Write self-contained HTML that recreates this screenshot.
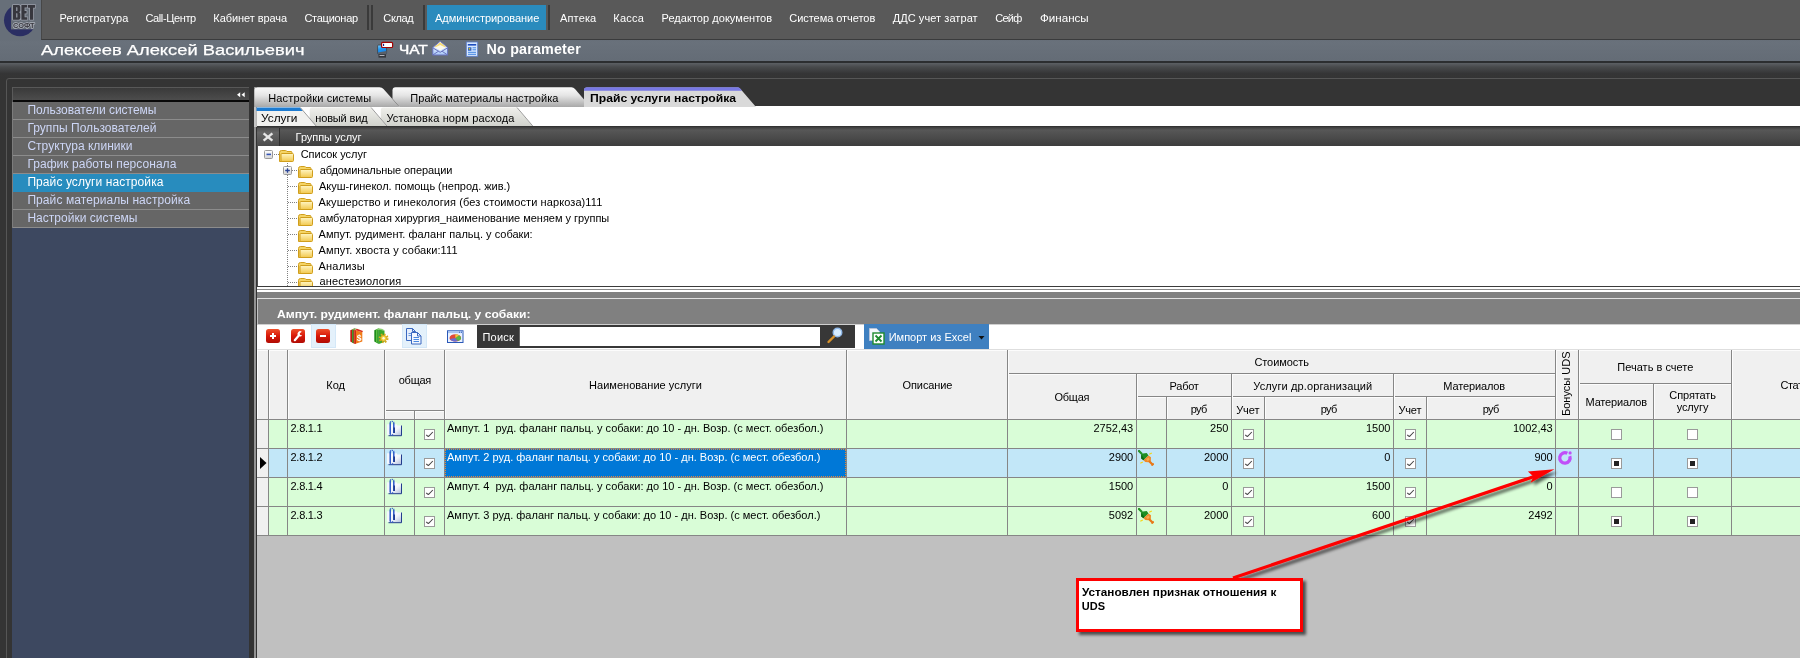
<!DOCTYPE html>
<html><head><meta charset="utf-8"><style>
*{box-sizing:border-box;margin:0;padding:0}
html,body{width:1800px;height:658px;overflow:hidden;background:#343434}
body{position:relative;font-family:"Liberation Sans",sans-serif;font-size:11px;color:#000}
#root{position:absolute;left:0;top:0;width:1800px;height:658px;will-change:transform;overflow:hidden}
.a{position:absolute}
.t{position:absolute;white-space:pre;line-height:normal}
svg{position:absolute;left:0;top:0;overflow:visible}
</style></head><body>
<div id="root">
<div class="a" style="left:0px;top:0px;width:1800px;height:61px;background:linear-gradient(#676f79 40px,#69717b 42px,#646c76 61px)"></div>
<div class="a" style="left:41px;top:0px;width:1759px;height:40px;background:#595959;border-left:1px solid #474747;border-bottom:1px solid #3a3b3c"></div>
<div class="a" style="left:0px;top:61px;width:1800px;height:18px;background:linear-gradient(#2c2e30 0,#2c2e30 1.5px,#5c6064 2px,#484a4c 6px,#353536 12.5px,#343434 18px)"></div>
<svg width="45" height="42"><circle cx="20" cy="20.200" r="16" fill="#2a2e63"/>
<rect x="11" y="0" width="29.500" height="29.400" fill="#666e78"/>
<path d="M13 5 H18.600 Q20.300 5 20.300 6.800 V10.600 Q20.300 12 19 12.200 Q20.300 12.500 20.300 14 V17.900 Q20.300 19.700 18.600 19.700 H13Z M16.200 7.300 V11 H17 Q17.400 11 17.400 10.500 V7.800 Q17.400 7.300 17 7.300Z M16.200 13.300 V17.400 H17 Q17.400 17.400 17.400 16.900 V13.800 Q17.400 13.300 17 13.300Z M21.400 5 H27.200 V7.500 H24.600 V11 H26.600 V13.400 H24.600 V17.200 H27.300 V19.700 H21.400Z M28 5 H35.200 V7.700 H33.200 V19.700 H30 V7.700 H28Z" fill="#b8bcc8" stroke="#b0b4c0" stroke-width="1.600" stroke-linejoin="round" opacity=".7" fill-rule="evenodd"/>
<path d="M13 5 H18.600 Q20.300 5 20.300 6.800 V10.600 Q20.300 12 19 12.200 Q20.300 12.500 20.300 14 V17.900 Q20.300 19.700 18.600 19.700 H13Z M16.200 7.300 V11 H17 Q17.400 11 17.400 10.500 V7.800 Q17.400 7.300 17 7.300Z M16.200 13.300 V17.400 H17 Q17.400 17.400 17.400 16.900 V13.800 Q17.400 13.300 17 13.300Z M21.400 5 H27.200 V7.500 H24.600 V11 H26.600 V13.400 H24.600 V17.200 H27.300 V19.700 H21.400Z M28 5 H35.200 V7.700 H33.200 V19.700 H30 V7.700 H28Z" fill="#37373e" fill-rule="evenodd"/>
<g font-family="Liberation Sans" font-weight="bold" stroke-linejoin="round">
<text x="13" y="27.700" font-size="7.400" fill="#c4c8d2" stroke="#c0c4ce" stroke-width="1.500" opacity=".8" textLength="21.500" lengthAdjust="spacingAndGlyphs">СОФТ</text>
<text x="13" y="27.700" font-size="7.400" fill="#38383f" textLength="21.500" lengthAdjust="spacingAndGlyphs">СОФТ</text></g></svg>
<span class="t" style="left:59.5px;top:11.8px;font-size:11px;color:#fff;letter-spacing:0.04px;">Регистратура</span>
<span class="t" style="left:145.5px;top:11.8px;font-size:11px;color:#fff;letter-spacing:-0.38px;">Call-Центр</span>
<span class="t" style="left:213.3px;top:11.8px;font-size:11px;color:#fff;letter-spacing:-0.07px;">Кабинет врача</span>
<span class="t" style="left:304.4px;top:11.8px;font-size:11px;color:#fff;letter-spacing:-0.26px;">Стационар</span>
<span class="t" style="left:383.3px;top:11.8px;font-size:11px;color:#fff;letter-spacing:-0.34px;">Склад</span>
<div class="a" style="left:367px;top:5px;width:2px;height:25px;background:#3a3a3a"></div>
<div class="a" style="left:371px;top:5px;width:2px;height:25px;background:#3a3a3a"></div>
<div class="a" style="left:423px;top:5px;width:2px;height:25px;background:#3a3a3a"></div>
<div class="a" style="left:548px;top:5px;width:2px;height:25px;background:#3a3a3a"></div>
<div class="a" style="left:427px;top:5px;width:119px;height:25px;background:#2a8bbd"></div>
<span class="t" style="left:435.0px;top:11.8px;font-size:11px;color:#fff;letter-spacing:-0.04px;">Администрирование</span>
<span class="t" style="left:560.0px;top:11.8px;font-size:11px;color:#fff;letter-spacing:0.14px;">Аптека</span>
<span class="t" style="left:613.3px;top:11.8px;font-size:11px;color:#fff;letter-spacing:0.26px;">Касса</span>
<span class="t" style="left:661.5px;top:11.8px;font-size:11px;color:#fff;letter-spacing:0.04px;">Редактор документов</span>
<span class="t" style="left:789.3px;top:11.8px;font-size:11px;color:#fff;letter-spacing:-0.05px;">Система отчетов</span>
<span class="t" style="left:892.7px;top:11.8px;font-size:11px;color:#fff;letter-spacing:0.07px;">ДДС учет затрат</span>
<span class="t" style="left:995.3px;top:11.8px;font-size:11px;color:#fff;letter-spacing:-0.76px;">Сейф</span>
<span class="t" style="left:1040.0px;top:11.8px;font-size:11px;color:#fff;transform-origin:0 0;transform:scaleX(1.0544);">Финансы</span>
<span class="t" style="left:41.0px;top:41.2px;font-size:15.5px;color:#fff;transform-origin:0 0;transform:scaleX(1.1824);-webkit-text-stroke:.25px #fff;">Алексеев Алексей Васильевич</span>
<span class="t" style="left:398.7px;top:42.0px;font-size:13.5px;color:#fff;transform-origin:0 0;transform:scaleX(1.1427);-webkit-text-stroke:.5px #fff;">ЧАТ</span>
<span class="t" style="left:486.6px;top:41.4px;font-size:14.3px;color:#fff;font-weight:bold;letter-spacing:0.18px;">No parameter</span>
<svg width="600" height="62">
<defs><linearGradient id="mon" x1="0" y1="0" x2=".3" y2="1"><stop offset="0" stop-color="#7fd0ff"/><stop offset=".5" stop-color="#1e96f2"/><stop offset="1" stop-color="#1a80e0"/></linearGradient><linearGradient id="env" x1="0" y1="0" x2="0" y2="1"><stop offset="0" stop-color="#fff"/><stop offset="1" stop-color="#a8c8f8"/></linearGradient></defs>
<g><rect x="377.600" y="45" width="9" height="9.200" rx="1" fill="url(#mon)" stroke="#3c4046" stroke-width=".8"/><path d="M378 52.500 L386.500 51 L386.500 54 L378 54Z" fill="#5a6068"/><path d="M378.500 54.300 h7.500 v3.300 h-7.500Z" fill="#34363a"/><path d="M379.500 55.500 h5" stroke="#b0b4bc" stroke-width="1"/><rect x="381.600" y="42.400" width="11" height="5.100" rx="1" fill="#fff" stroke="#a00404" stroke-width="1.200"/><rect x="383" y="43.800" width="1.100" height="2.200" fill="#102090"/></g>
<g><path d="M432.800 47.500 L440.200 41.300 L447.600 47.500 L447.600 55 L432.800 55Z" fill="url(#env)" stroke="#6a74c0" stroke-width="1"/><path d="M434.500 46.800 L440.200 42.300 L446 46.800 L440.200 49.500Z" fill="#f6dc7a"/><path d="M435 47.500 L440.200 45 L445.500 47.500 L440.200 50.500Z" fill="#fff" opacity=".85"/><path d="M432.800 47.800 L440.200 52.300 L447.600 47.800 M432.800 55 L438.500 51.200 M447.600 55 L442 51.200" fill="none" stroke="#6a74c0" stroke-width="1"/></g>
<g><rect x="466.300" y="42" width="11.400" height="14.300" fill="#d8e8ff" stroke="#5a7cc8" stroke-width=".8"/><rect x="467.800" y="44" width="8.400" height="1.600" fill="#1c4cc0"/><rect x="468" y="47.300" width="3.400" height="3.400" fill="#1e56c8"/><rect x="468.700" y="48" width="1.600" height="1.600" fill="#d8c020"/><path d="M472.500 47.800 h3.500 M472.500 49.800 h3.500 M468 52.300 h8 M468 54.300 h8" stroke="#2c78e0" stroke-width=".9"/></g>
</svg>
<div class="a" style="left:6px;top:78px;width:1810px;height:600px;border:1px solid #565656;border-radius:3px 0 0 0"></div>
<div class="a" style="left:12px;top:87px;width:237px;height:571px;background:#3d4860"></div>
<div class="a" style="left:12px;top:87px;width:237px;height:15px;background:linear-gradient(#585858 0,#585858 1px,#3a3a3a 1px,#4d4d4d 13.5px,#080808 13.500px,#080808 15px);border-left:1px solid #5a5a5a"></div>
<div class="a" style="left:12px;top:102px;width:1px;height:126px;background:#7c7c7c;z-index:2"></div>
<svg width="260" height="110"><path d="M240.200 92.300 L240.200 97.300 L237 94.800Z M244.700 92.300 L244.700 97.300 L241.500 94.800Z" fill="#fff"/></svg>
<div class="a" style="left:12px;top:102px;width:237px;height:18px;background:#666;border-bottom:1px solid #8c8c8c"></div>
<span class="t" style="left:27.4px;top:103.1px;font-size:12px;color:#cdd6f6;letter-spacing:-0.01px;">Пользователи системы</span>
<div class="a" style="left:12px;top:120px;width:237px;height:18px;background:#666;border-bottom:1px solid #8c8c8c"></div>
<span class="t" style="left:27.4px;top:121.1px;font-size:12px;color:#cdd6f6;letter-spacing:0.04px;">Группы Пользователей</span>
<div class="a" style="left:12px;top:138px;width:237px;height:18px;background:#666;border-bottom:1px solid #8c8c8c"></div>
<span class="t" style="left:27.4px;top:139.1px;font-size:12px;color:#cdd6f6;letter-spacing:0.03px;">Структура клиники</span>
<div class="a" style="left:12px;top:156px;width:237px;height:18px;background:#666;border-bottom:1px solid #8c8c8c"></div>
<span class="t" style="left:27.4px;top:157.1px;font-size:12px;color:#cdd6f6;letter-spacing:0.04px;">График работы персонала</span>
<div class="a" style="left:12px;top:174px;width:237px;height:18px;background:#288cbe"></div>
<span class="t" style="left:27.4px;top:175.1px;font-size:12px;color:#fff;letter-spacing:0.08px;">Прайс услуги настройка</span>
<div class="a" style="left:12px;top:192px;width:237px;height:18px;background:#666;border-bottom:1px solid #8c8c8c"></div>
<span class="t" style="left:27.4px;top:193.1px;font-size:12px;color:#cdd6f6;letter-spacing:0.08px;">Прайс материалы настройка</span>
<div class="a" style="left:12px;top:210px;width:237px;height:18px;background:#666;border-bottom:1px solid #8c8c8c"></div>
<span class="t" style="left:27.4px;top:211.1px;font-size:12px;color:#cdd6f6;letter-spacing:0.02px;">Настройки системы</span>
<div class="a" style="left:12px;top:227px;width:237px;height:1px;background:#8c8c8c"></div>
<div class="a" style="left:249px;top:87px;width:5px;height:571px;background:#333"></div>
<div class="a" style="left:253.7px;top:87px;width:2.8px;height:571px;background:#929292"></div>
<div class="a" style="left:257px;top:106px;width:1543px;height:21px;background:#fff"></div>
<svg width="1800" height="130">
<defs><linearGradient id="tg" x1="0" y1="0" x2="0" y2="1"><stop offset="0" stop-color="#fafafa"/><stop offset=".4" stop-color="#e6e6e6"/><stop offset="1" stop-color="#a8a8a8"/></linearGradient>
<linearGradient id="tg2" x1="0" y1="0" x2="0" y2="1"><stop offset="0" stop-color="#efefeb"/><stop offset="1" stop-color="#cfd1cb"/></linearGradient>
<linearGradient id="ta" x1="0" y1="0" x2="0" y2="1"><stop offset="0" stop-color="#fff"/><stop offset="1" stop-color="#d8d8d8"/></linearGradient></defs>
<path d="M254.500 107 L254.500 90.300 Q254.500 87.300 257.500 87.300 L379.500 87.300 Q382 87.300 383.500 89 L399.500 107Z" fill="url(#tg)"/>
<path d="M399.500 107 L392.500 98.800 L392.500 90.300 Q392.500 87.300 395.500 87.300 L571.500 87.300 Q573.500 87.300 575 89 L590.500 107Z" fill="url(#tg)"/>
<path d="M584 107 L584 90 Q584 87.500 587 87.500 L738 87.500 Q739.500 87.500 740.500 89 L756 107Z" fill="#d9d9d9"/>
<path d="M584 90.800 L584 90 Q584 87.300 587 87.300 L738 87.300 Q739.500 87.300 740.500 89 L742 90.800Z" fill="#7878e4"/>
<!-- row2 -->
<rect x="254" y="107" width="2.500" height="20" fill="#c4c4c4"/>
<path d="M256.500 127 L256.500 107.500 L300 107.500 L316.700 127Z" fill="#f1f1ef"/>
<path d="M256.500 107.500 L300 107.500 L303 111 L256.500 111Z" fill="#1d7bd0"/>
<path d="M316.700 127 L309.700 119 L309.700 110 Q309.700 107.500 312.200 107.500 L370.800 107.500 L387.500 127Z" fill="url(#tg2)"/>
<path d="M387.500 127 L380.800 119.500 L380.800 110 Q380.800 107.500 383.300 107.500 L516.700 107.500 L533.300 127Z" fill="url(#tg2)"/>
<path d="M300.300 107.500 L317 127 M371.100 107.500 L387.800 127 M517 107.500 L533.600 127" stroke="#9c9c9c" stroke-width="1" fill="none"/>
</svg>
<span class="t" style="left:268.2px;top:92.3px;font-size:11px;color:#000;letter-spacing:0.15px;">Настройки системы</span>
<span class="t" style="left:410.3px;top:92.3px;font-size:11px;color:#000;letter-spacing:0.03px;">Прайс материалы настройка</span>
<span class="t" style="left:589.5px;top:92.3px;font-size:11px;color:#000;font-weight:bold;transform-origin:0 0;transform:scaleX(1.1060);">Прайс услуги настройка</span>
<span class="t" style="left:261.3px;top:112.3px;font-size:11px;color:#000;transform-origin:0 0;transform:scaleX(1.0790);">Услуги</span>
<span class="t" style="left:315.3px;top:112.3px;font-size:11px;color:#000;letter-spacing:-0.16px;">новый вид</span>
<span class="t" style="left:386.4px;top:112.3px;font-size:11px;color:#000;letter-spacing:0.12px;">Установка норм расхода</span>
<div class="a" style="left:257px;top:126px;width:1543px;height:20px;background:linear-gradient(#2c2c2c 0,#404040 1.5px,#575757 4px,#3d3d3d 100%)"></div>
<div class="a" style="left:256.5px;top:127.5px;width:23px;height:18.5px;background:linear-gradient(#525252,#666 25%,#4c4c4c);border-right:1px solid #2e2e2e"></div>
<svg width="300" height="150"><path d="M263.600 133.300 L272.400 140.600 M272.400 133.300 L263.600 140.600" stroke="#e6e6e6" stroke-width="2.400" fill="none"/></svg>
<span class="t" style="left:295.6px;top:131.1px;font-size:11px;color:#fff;letter-spacing:-0.05px;">Группы услуг</span>
<div class="a" style="left:256.5px;top:146px;width:1543.5px;height:140px;background:#fff;border-left:1px solid #505050"></div>
<svg width="700" height="286" style="clip-path:inset(0 0 0 0)"><defs><linearGradient id="fg" x1="0" y1="0" x2="0" y2="1"><stop offset="0" stop-color="#fff6c4"/><stop offset="1" stop-color="#f2c84e"/></linearGradient><linearGradient id="bx" x1="0" y1="0" x2="0" y2="1"><stop offset="0" stop-color="#fff"/><stop offset="1" stop-color="#d4d4d4"/></linearGradient><g id="fold"><path d="M0.500 2.500 Q0.500 0.500 2.500 0.500 L6.500 0.500 Q7.500 0.500 8 1.500 L12 1.500 Q13 1.500 13 2.500 L13 11.500 L0.500 11.500Z" fill="#f4d466" stroke="#d09e1c" stroke-width="1"/><rect x="2" y="3.500" width="12.500" height="8" rx="1" fill="url(#fg)" stroke="#d09e1c" stroke-width="1"/></g></defs><path d="M274 154.500 L279 154.500 M287.500 163 L287.500 286" stroke="#808080" stroke-width="1" stroke-dasharray="1 1" fill="none"/><use href="#fold" x="279" y="150"/><rect x="264.500" y="150.5" width="8" height="8" rx="1" fill="url(#bx)" stroke="#9a9a9a"/><path d="M266.500 154.4 h4.500" stroke="#3555b5" stroke-width="1.600"/><path d="M292 170.5 L298 170.5" stroke="#808080" stroke-width="1" stroke-dasharray="1 1"/><use href="#fold" x="298" y="166"/><rect x="283.500" y="166.5" width="8" height="8" rx="1" fill="url(#bx)" stroke="#9a9a9a"/><path d="M285.200 170.5 h4.600 M287.500 168.2 v4.600" stroke="#2a4496" stroke-width="1.300"/><path d="M288 186.5 L298 186.5" stroke="#808080" stroke-width="1" stroke-dasharray="1 1"/><use href="#fold" x="298" y="182"/><path d="M288 202.5 L298 202.5" stroke="#808080" stroke-width="1" stroke-dasharray="1 1"/><use href="#fold" x="298" y="198"/><path d="M288 218.5 L298 218.5" stroke="#808080" stroke-width="1" stroke-dasharray="1 1"/><use href="#fold" x="298" y="214"/><path d="M288 234.5 L298 234.5" stroke="#808080" stroke-width="1" stroke-dasharray="1 1"/><use href="#fold" x="298" y="230"/><path d="M288 250.5 L298 250.5" stroke="#808080" stroke-width="1" stroke-dasharray="1 1"/><use href="#fold" x="298" y="246"/><path d="M288 266.5 L298 266.5" stroke="#808080" stroke-width="1" stroke-dasharray="1 1"/><use href="#fold" x="298" y="262"/><path d="M288 282.5 L298 282.5" stroke="#808080" stroke-width="1" stroke-dasharray="1 1"/><use href="#fold" x="298" y="278"/></svg>
<span class="t" style="left:300.7px;top:147.5px;font-size:11px;color:#000;letter-spacing:-0.02px;">Список услуг</span>
<span class="t" style="left:319.7px;top:163.8px;font-size:11px;color:#000;letter-spacing:-0.09px;">абдоминальные операции</span>
<span class="t" style="left:319.0px;top:179.8px;font-size:11px;color:#000;letter-spacing:-0.02px;">Акуш-гинекол. помощь (непрод. жив.)</span>
<span class="t" style="left:318.6px;top:195.8px;font-size:11px;color:#000;letter-spacing:0.09px;">Акушерство и гинекология (без стоимости наркоза)111</span>
<span class="t" style="left:319.6px;top:211.8px;font-size:11px;color:#000;letter-spacing:-0.02px;">амбулаторная хирургия_наименование меняем у группы</span>
<span class="t" style="left:318.6px;top:227.8px;font-size:11px;color:#000;letter-spacing:0.01px;">Ампут. рудимент. фаланг пальц. у собаки:</span>
<span class="t" style="left:318.6px;top:243.8px;font-size:11px;color:#000;letter-spacing:0.10px;">Ампут. хвоста у собаки:111</span>
<span class="t" style="left:318.6px;top:259.8px;font-size:11px;color:#000;letter-spacing:0.18px;">Анализы</span>
<span class="t" style="left:319.6px;top:275.4px;font-size:11px;color:#000;letter-spacing:0.09px;">анестезиология</span>
<div class="a" style="left:256.5px;top:285.8px;width:1543.5px;height:13.4px;background:linear-gradient(#3c3c3c 0,#3c3c3c .9px,#fff 1.2px,#fff 3px,#8a8a8a 3px,#8a8a8a 4.4px,#fff 4.4px,#fff 6.2px,#808080 6.2px,#808080 12.1px,#e0e0e0 12.1px,#e0e0e0 13.400px)"></div>
<div class="a" style="left:256.5px;top:299.2px;width:1543.5px;height:24.8px;background:#808080;border-left:1px solid #c4c4c4"></div>
<span class="t" style="left:277.0px;top:308.0px;font-size:11px;color:#fff;font-weight:bold;transform-origin:0 0;transform:scaleX(1.0999);">Ампут. рудимент. фаланг пальц. у собаки:</span>
<div class="a" style="left:257px;top:324px;width:1543px;height:25px;background:linear-gradient(#cfcfcf 0,#cfcfcf 1px,#fff 1px)"></div>
<div class="a" style="left:311px;top:324px;width:25px;height:24px;background:#e4f1fb;border:1px solid #d4e8f8"></div>
<div class="a" style="left:402px;top:324px;width:25px;height:24px;background:#e4f1fb;border:1px solid #d4e8f8"></div>
<svg width="1000" height="350">
<defs><linearGradient id="rb" x1="0" y1="0" x2="0" y2="1"><stop offset="0" stop-color="#f0502a"/><stop offset=".5" stop-color="#d81808"/><stop offset="1" stop-color="#b00c04"/></linearGradient></defs>
<rect x="266" y="329" width="14" height="14" rx="2.500" fill="url(#rb)"/><path d="M270 336 h6 M273 333 v6" stroke="#fff" stroke-width="2"/>
<rect x="291" y="329" width="14" height="14" rx="2.500" fill="url(#rb)"/><path d="M294.800 340.200 L299 335.200" stroke="#fff" stroke-width="2.200" stroke-linecap="round" fill="none"/><path d="M301.800 331.800 A2.600 2.600 0 1 0 302.200 335.500 L299.800 334.800 L299.800 333.200Z" fill="#fff"/>
<rect x="316" y="329" width="14" height="14" rx="2.500" fill="url(#rb)"/><path d="M320 336 h6" stroke="#fff" stroke-width="2"/>
<g><path d="M350.300 330.300 L354.800 328.200 L354.800 344 L350.300 341.500Z" fill="#c4180e"/><path d="M351.800 329.600 L354.800 328.200 L357 328.800 L353.500 330.300Z" fill="#7cc060"/><path d="M352 330.200 L353.600 329.500 L353.600 343.300 L352 342.400Z" fill="#3f9a2e"/><path d="M354.800 330 L362.300 332.200 L362.300 341.600 L354.800 344Z" fill="#f07c1a"/><path d="M354.800 330 L357 328.800 L363 331 L362.300 332.200Z" fill="#d8301a"/><path d="M354.800 330 L356 330.400 L356 343.600 L354.800 344Z" fill="#d02a14"/><text x="356.800" y="341.300" font-size="8.500" font-weight="bold" fill="#fff" font-family="Liberation Sans">$</text></g>
<g><path d="M374.300 330.300 L378.800 328.200 L378.800 344 L374.300 341.500Z" fill="#1f8a1c"/><path d="M375.800 329.600 L378.800 328.200 L384 329.300 L381 330.600Z" fill="#8ad070"/><path d="M378.800 329.800 L384.500 330.500 L384.500 342 L378.800 344Z" fill="#3aa82c"/><path d="M376 330 L377.500 329.400 L377.500 343.300 L376 342.400Z" fill="#58c040"/><circle cx="383.600" cy="338.300" r="3.600" fill="none" stroke="#d8a818" stroke-width="2.600" stroke-dasharray="1.400 1.420"/><circle cx="383.600" cy="338.300" r="3" fill="#f4d040" stroke="#c89818" stroke-width=".6"/><circle cx="383.600" cy="338.300" r="1.200" fill="#fffbe0"/></g>
<g><path d="M406.500 328.500 h6 l3 3 v9 h-9Z" fill="#e6effc" stroke="#3a68c0"/><path d="M412.500 328.500 v3 h3" fill="none" stroke="#3a68c0"/><path d="M408.500 333.500 h4 M408.500 335.500 h3" stroke="#6a98e0"/><path d="M411.500 332.500 h6 l3.500 3.500 v8 h-9.500Z" fill="#f2f7ff" stroke="#3a68c0"/><path d="M417.500 332.500 v3.500 h3.500" fill="none" stroke="#3a68c0"/><path d="M413.500 337.500 h5.500 M413.500 339.500 h5.500 M413.500 341.500 h5.500" stroke="#4a88e0"/></g>
<g><rect x="447.500" y="330.800" width="15.500" height="11.700" fill="#eaf2ff" stroke="#2a58b8"/><rect x="448" y="331.300" width="14.500" height="1.800" fill="#a8c4f0"/><path d="M459 332.200 h1 M461 332.200 h1" stroke="#2a58b8" stroke-width="1"/><ellipse cx="455.300" cy="337.900" rx="5.800" ry="3.600" fill="#e0483a"/><path d="M455.300 337.900 L449.800 339 A5.800 3.600 0 0 0 458 341.100Z" fill="#6a6cd0"/><path d="M455.300 337.900 L458 341.100 A5.800 3.600 0 0 0 459 335.200Z" fill="#58b848"/><path d="M455.300 337.900 L459 335.200 A5.800 3.600 0 0 0 455.300 334.300Z" fill="#f0c838"/></g>
</svg>
<div class="a" style="left:477px;top:325px;width:378px;height:22.7px;background:#373737"></div>
<span class="t" style="left:482.5px;top:330.8px;font-size:11px;color:#fff;letter-spacing:0.18px;">Поиск</span>
<div class="a" style="left:519px;top:326.5px;width:301px;height:19.8px;background:#fff;border-left:1px solid #666"></div>
<svg width="900" height="350"><circle cx="837.500" cy="332.500" r="4.300" fill="#d6ecff" stroke="#8fb8e8" stroke-width="1.400"/><path d="M834 336.500 L828.500 342" stroke="#d8922a" stroke-width="2.400" stroke-linecap="round"/></svg>
<div class="a" style="left:864px;top:324px;width:125px;height:25px;background:#3f80c0"></div>
<svg width="1000" height="350"><path d="M869.500 328.500 h7 l3 3 v9 h-10Z" fill="#f4f7fb" stroke="#b8c4d8"/><rect x="873" y="333" width="11" height="11" fill="#fff" stroke="#1e8a2e" stroke-width="1.400"/><path d="M875.500 335.500 l6 6 M881.500 335.500 l-6 6" stroke="#1e8a2e" stroke-width="1.800"/><path d="M978.500 336 h6 l-3 3.500Z" fill="#111"/></svg>
<span class="t" style="left:888.7px;top:330.8px;font-size:11px;color:#fff;letter-spacing:-0.00px;">Импорт из Excel</span>
<div class="a" style="left:256.5px;top:348.5px;width:1543.5px;height:70.5px;background:#f0f0f0;border-top:1px solid #dedede;border-left:1.500px solid #fff"></div>
<div class="a" style="left:257px;top:535px;width:1543px;height:123px;background:#c0c0c0"></div>
<div class="a" style="left:257px;top:419px;width:1543px;height:29px;background:#d9fdd7"></div>
<div class="a" style="left:256.5px;top:419px;width:11.5px;height:29px;background:#f0f0f0"></div>
<div class="a" style="left:257px;top:448px;width:1543px;height:29px;background:#c2e7f8"></div>
<div class="a" style="left:256.5px;top:448px;width:11.5px;height:29px;background:#f0f0f0"></div>
<div class="a" style="left:257px;top:477px;width:1543px;height:29px;background:#d9fdd7"></div>
<div class="a" style="left:256.5px;top:477px;width:11.5px;height:29px;background:#f0f0f0"></div>
<div class="a" style="left:257px;top:506px;width:1543px;height:29px;background:#d9fdd7"></div>
<div class="a" style="left:256.5px;top:506px;width:11.5px;height:29px;background:#f0f0f0"></div>
<div class="a" style="left:445px;top:449px;width:401px;height:28px;background:#0078d7;outline:1px dotted #e08a3c;outline-offset:-1px"></div>
<div class="a" style="left:257px;top:419px;width:1543px;height:1px;background:#868686"></div>
<div class="a" style="left:257px;top:448px;width:1543px;height:1px;background:#868686"></div>
<div class="a" style="left:257px;top:477px;width:1543px;height:1px;background:#868686"></div>
<div class="a" style="left:257px;top:506px;width:1543px;height:1px;background:#868686"></div>
<div class="a" style="left:257px;top:535px;width:1543px;height:1px;background:#868686"></div>
<div class="a" style="left:1007px;top:373px;width:548px;height:1px;background:#868686"></div>
<div class="a" style="left:1008px;top:374px;width:547px;height:1px;background:#fcfcfc"></div>
<div class="a" style="left:1136px;top:396px;width:419px;height:1px;background:#868686"></div>
<div class="a" style="left:1137px;top:397px;width:418px;height:1px;background:#fcfcfc"></div>
<div class="a" style="left:384px;top:410px;width:60px;height:1px;background:#868686"></div>
<div class="a" style="left:385px;top:411px;width:59px;height:1px;background:#fcfcfc"></div>
<div class="a" style="left:1578px;top:383px;width:153px;height:1px;background:#868686"></div>
<div class="a" style="left:1579px;top:384px;width:152px;height:1px;background:#fcfcfc"></div>
<div class="a" style="left:258px;top:349.5px;width:1542px;height:1px;background:#fcfcfc"></div>
<div class="a" style="left:268px;top:350px;width:1px;height:186px;background:#868686"></div>
<div class="a" style="left:269px;top:350px;width:1px;height:69px;background:#fcfcfc"></div>
<div class="a" style="left:287px;top:350px;width:1px;height:186px;background:#868686"></div>
<div class="a" style="left:288px;top:350px;width:1px;height:69px;background:#fcfcfc"></div>
<div class="a" style="left:384px;top:350px;width:1px;height:186px;background:#868686"></div>
<div class="a" style="left:385px;top:350px;width:1px;height:69px;background:#fcfcfc"></div>
<div class="a" style="left:444px;top:350px;width:1px;height:186px;background:#868686"></div>
<div class="a" style="left:445px;top:350px;width:1px;height:69px;background:#fcfcfc"></div>
<div class="a" style="left:846px;top:350px;width:1px;height:186px;background:#868686"></div>
<div class="a" style="left:847px;top:350px;width:1px;height:69px;background:#fcfcfc"></div>
<div class="a" style="left:1007px;top:350px;width:1px;height:186px;background:#868686"></div>
<div class="a" style="left:1008px;top:350px;width:1px;height:69px;background:#fcfcfc"></div>
<div class="a" style="left:1555px;top:350px;width:1px;height:186px;background:#868686"></div>
<div class="a" style="left:1556px;top:350px;width:1px;height:69px;background:#fcfcfc"></div>
<div class="a" style="left:1578px;top:350px;width:1px;height:186px;background:#868686"></div>
<div class="a" style="left:1579px;top:350px;width:1px;height:69px;background:#fcfcfc"></div>
<div class="a" style="left:1731px;top:350px;width:1px;height:186px;background:#868686"></div>
<div class="a" style="left:1732px;top:350px;width:1px;height:69px;background:#fcfcfc"></div>
<div class="a" style="left:1136px;top:373px;width:1px;height:163px;background:#868686"></div>
<div class="a" style="left:1137px;top:374px;width:1px;height:45px;background:#fcfcfc"></div>
<div class="a" style="left:1231px;top:373px;width:1px;height:163px;background:#868686"></div>
<div class="a" style="left:1232px;top:374px;width:1px;height:45px;background:#fcfcfc"></div>
<div class="a" style="left:1393px;top:373px;width:1px;height:163px;background:#868686"></div>
<div class="a" style="left:1394px;top:374px;width:1px;height:45px;background:#fcfcfc"></div>
<div class="a" style="left:1653px;top:383px;width:1px;height:153px;background:#868686"></div>
<div class="a" style="left:1654px;top:384px;width:1px;height:35px;background:#fcfcfc"></div>
<div class="a" style="left:1166px;top:396px;width:1px;height:140px;background:#868686"></div>
<div class="a" style="left:1167px;top:397px;width:1px;height:22px;background:#fcfcfc"></div>
<div class="a" style="left:1264px;top:396px;width:1px;height:140px;background:#868686"></div>
<div class="a" style="left:1265px;top:397px;width:1px;height:22px;background:#fcfcfc"></div>
<div class="a" style="left:1426px;top:396px;width:1px;height:140px;background:#868686"></div>
<div class="a" style="left:1427px;top:397px;width:1px;height:22px;background:#fcfcfc"></div>
<div class="a" style="left:414px;top:410px;width:1px;height:126px;background:#868686"></div>
<div class="a" style="left:415px;top:411px;width:1px;height:8px;background:#fcfcfc"></div>
<span class="t" style="left:326.3px;top:379.3px;font-size:11px;color:#000;letter-spacing:-0.00px;">Код</span>
<span class="t" style="left:398.8px;top:373.8px;font-size:11px;color:#000;letter-spacing:-0.29px;">общая</span>
<span class="t" style="left:589.0px;top:379.0px;font-size:11px;color:#000;letter-spacing:0.04px;">Наименование услуги</span>
<span class="t" style="left:902.5px;top:379.0px;font-size:11px;color:#000;letter-spacing:-0.09px;">Описание</span>
<span class="t" style="left:1054.5px;top:391.0px;font-size:11px;color:#000;letter-spacing:-0.25px;">Общая</span>
<span class="t" style="left:1254.4px;top:356.0px;font-size:11px;color:#000;letter-spacing:-0.07px;">Стоимость</span>
<span class="t" style="left:1169.5px;top:380.0px;font-size:11px;color:#000;letter-spacing:-0.23px;">Работ</span>
<span class="t" style="left:1253.3px;top:380.0px;font-size:11px;color:#000;letter-spacing:0.12px;">Услуги др.организаций</span>
<span class="t" style="left:1443.3px;top:380.0px;font-size:11px;color:#000;letter-spacing:-0.14px;">Материалов</span>
<span class="t" style="left:1190.7px;top:402.5px;font-size:11px;color:#000;letter-spacing:-0.66px;">руб</span>
<span class="t" style="left:1236.2px;top:403.5px;font-size:11px;color:#000;letter-spacing:-0.07px;">Учет</span>
<span class="t" style="left:1320.7px;top:402.5px;font-size:11px;color:#000;letter-spacing:-0.66px;">руб</span>
<span class="t" style="left:1398.4px;top:403.5px;font-size:11px;color:#000;letter-spacing:-0.14px;">Учет</span>
<span class="t" style="left:1482.7px;top:402.5px;font-size:11px;color:#000;letter-spacing:-0.66px;">руб</span>
<span class="t" style="left:1617.3px;top:361.0px;font-size:11px;color:#000;letter-spacing:0.01px;">Печать в счете</span>
<span class="t" style="left:1585.5px;top:396.0px;font-size:11px;color:#000;letter-spacing:-0.16px;">Материалов</span>
<span class="t" style="left:1669.3px;top:389.0px;font-size:11px;color:#000;letter-spacing:-0.10px;">Спрятать</span>
<span class="t" style="left:1676.7px;top:400.8px;font-size:11px;color:#000;letter-spacing:-0.12px;">услугу</span>
<span class="t" style="left:1780.4px;top:379.0px;font-size:11px;color:#000;letter-spacing:-0.39px;">Стат</span>
<div class="a" style="left:1555px;top:349px;width:23px;height:70px;overflow:hidden"><span class="t" style="left:4.800px;top:66.500px;transform-origin:0 0;transform:rotate(-90deg);font-size:11px;letter-spacing:0px">Бонусы UDS</span></div>
<span class="t" style="left:290.5px;top:422.1px;font-size:11px;color:#000;letter-spacing:-0.27px;">2.8.1.1</span>
<span class="t" style="left:447.0px;top:422.1px;font-size:11px;color:#000;letter-spacing:0.01px;">Ампут. 1  руд. фаланг пальц. у собаки: до 10 - дн. Возр. (с мест. обезбол.)</span>
<span class="t" style="left:1093.5px;top:422.1px;font-size:11px;color:#000;letter-spacing:-0.01px;">2752,43</span>
<span class="t" style="left:1210.1px;top:422.1px;font-size:11px;color:#000;letter-spacing:-0.03px;">250</span>
<span class="t" style="left:1366.0px;top:422.1px;font-size:11px;color:#000;letter-spacing:-0.03px;">1500</span>
<span class="t" style="left:1513.0px;top:422.1px;font-size:11px;color:#000;letter-spacing:-0.01px;">1002,43</span>
<span class="t" style="left:290.5px;top:451.1px;font-size:11px;color:#000;letter-spacing:-0.27px;">2.8.1.2</span>
<span class="t" style="left:447.0px;top:451.1px;font-size:11px;color:#fff;letter-spacing:0.01px;">Ампут. 2 руд. фаланг пальц. у собаки: до 10 - дн. Возр. (с мест. обезбол.)</span>
<span class="t" style="left:1108.8px;top:451.1px;font-size:11px;color:#000;letter-spacing:-0.03px;">2900</span>
<span class="t" style="left:1204.0px;top:451.1px;font-size:11px;color:#000;letter-spacing:-0.03px;">2000</span>
<span class="t" style="left:1384.3px;top:451.1px;font-size:11px;color:#000;">0</span>
<span class="t" style="left:1534.4px;top:451.1px;font-size:11px;color:#000;letter-spacing:-0.03px;">900</span>
<span class="t" style="left:290.5px;top:480.1px;font-size:11px;color:#000;letter-spacing:-0.27px;">2.8.1.4</span>
<span class="t" style="left:447.0px;top:480.1px;font-size:11px;color:#000;letter-spacing:0.01px;">Ампут. 4  руд. фаланг пальц. у собаки: до 10 - дн. Возр. (с мест. обезбол.)</span>
<span class="t" style="left:1108.8px;top:480.1px;font-size:11px;color:#000;letter-spacing:-0.03px;">1500</span>
<span class="t" style="left:1222.3px;top:480.1px;font-size:11px;color:#000;">0</span>
<span class="t" style="left:1366.0px;top:480.1px;font-size:11px;color:#000;letter-spacing:-0.03px;">1500</span>
<span class="t" style="left:1546.6px;top:480.1px;font-size:11px;color:#000;">0</span>
<span class="t" style="left:290.5px;top:509.1px;font-size:11px;color:#000;letter-spacing:-0.27px;">2.8.1.3</span>
<span class="t" style="left:447.0px;top:509.1px;font-size:11px;color:#000;letter-spacing:0.01px;">Ампут. 3 руд. фаланг пальц. у собаки: до 10 - дн. Возр. (с мест. обезбол.)</span>
<span class="t" style="left:1108.8px;top:509.1px;font-size:11px;color:#000;letter-spacing:-0.03px;">5092</span>
<span class="t" style="left:1204.0px;top:509.1px;font-size:11px;color:#000;letter-spacing:-0.03px;">2000</span>
<span class="t" style="left:1372.1px;top:509.1px;font-size:11px;color:#000;letter-spacing:-0.03px;">600</span>
<span class="t" style="left:1528.3px;top:509.1px;font-size:11px;color:#000;letter-spacing:-0.03px;">2492</span>
<svg width="1800" height="658"><defs><g id="cb"><rect x=".5" y=".5" width="10" height="10" fill="#fff" stroke="#9a9a9a"/></g><g id="ck"><path d="M2.300 5.800 Q3.500 7.300 4.600 7.400 Q6.500 5.500 8.800 3" stroke="#444" stroke-width="1.100" fill="none"/></g><g id="sq"><rect x="3" y="3" width="5" height="5" fill="#222"/></g><linearGradient id="cpg" x1="0" y1="0" x2="1" y2="1"><stop offset="0" stop-color="#fff"/><stop offset=".5" stop-color="#f2f5fb"/><stop offset="1" stop-color="#aebbdc"/></linearGradient><g id="cp"><rect x="1" y="2.800" width="10" height="10.500" fill="#f4f7fc"/><rect x="3" y="4" width="12.500" height="10" fill="url(#cpg)"/><path d="M15.500 4 V14.200 H2.500" stroke="#223c8c" stroke-width="1" fill="none"/><path d="M4.200 1 V13 M7.800 1 V11.500" stroke="#2c5ac8" stroke-width="1.500" fill="none"/><path d="M4 1 Q6 -1.200 8 1" stroke="#2c5ac8" stroke-width="1.300" stroke-dasharray="1.200 .8" fill="none"/><path d="M4 13.300 H8" stroke="#2c5ac8" stroke-width="1.300" stroke-dasharray="1.200 .8"/><path d="M8.200 6 V11.500" stroke="#102a80" stroke-width="1.300"/></g><g id="vac"><circle cx="1" cy="1" r="1.100" fill="#1b7d1b"/><path d="M1 1 L4 4" stroke="#23962a" stroke-width="2.200"/><path d="M3.200 3.800 L8.700 3.100 L10.500 5.400 L5.500 10.200 L3.200 8.400Z" fill="#1e8f24"/><path d="M3.200 4.500 L3.200 8.400 L5.500 10.200 L6.500 9.200Z" fill="#0e6a14"/><path d="M10.500 5.400 L13 7.200 L12.800 10.900 L10.300 12.300 L7.300 12 L5.500 10.200Z" fill="#f08a28"/><path d="M8 9 L11 7.500 L11.500 10 L9.500 11Z" fill="#f8aa50"/><path d="M11 11 L15.300 15.300" stroke="#e87818" stroke-width="2.300"/><path d="M13.500 15.500 L15.700 13.500" stroke="#e87818" stroke-width="1.200"/><path d="M11.200 4.300 L13.800 3 M2.300 13.300 L4.800 12" stroke="#f5d614" stroke-width="1.200"/></g></defs><use href="#cp" x="386" y="421.5"/><use href="#cb" x="424" y="429"/><use href="#ck" x="424" y="429"/><use href="#cb" x="1243" y="429"/><use href="#ck" x="1243" y="429"/><use href="#cb" x="1405" y="429"/><use href="#ck" x="1405" y="429"/><use href="#cb" x="1611" y="429"/><use href="#cb" x="1687" y="429"/><use href="#cp" x="386" y="450.5"/><use href="#cb" x="424" y="458"/><use href="#ck" x="424" y="458"/><use href="#cb" x="1243" y="458"/><use href="#ck" x="1243" y="458"/><use href="#cb" x="1405" y="458"/><use href="#ck" x="1405" y="458"/><use href="#cb" x="1611" y="458"/><use href="#sq" x="1611" y="458"/><use href="#cb" x="1687" y="458"/><use href="#sq" x="1687" y="458"/><use href="#vac" x="1138" y="450"/><use href="#cp" x="386" y="479.5"/><use href="#cb" x="424" y="487"/><use href="#ck" x="424" y="487"/><use href="#cb" x="1243" y="487"/><use href="#ck" x="1243" y="487"/><use href="#cb" x="1405" y="487"/><use href="#ck" x="1405" y="487"/><use href="#cb" x="1611" y="487"/><use href="#cb" x="1687" y="487"/><use href="#cp" x="386" y="508.5"/><use href="#cb" x="424" y="516"/><use href="#ck" x="424" y="516"/><use href="#cb" x="1243" y="516"/><use href="#ck" x="1243" y="516"/><use href="#cb" x="1405" y="516"/><use href="#ck" x="1405" y="516"/><use href="#cb" x="1611" y="516"/><use href="#sq" x="1611" y="516"/><use href="#cb" x="1687" y="516"/><use href="#sq" x="1687" y="516"/><use href="#vac" x="1138" y="508"/><path d="M260 457 L266.500 463 L260 469Z" fill="#000"/><path d="M1567.34 453.31 A5.2 5.2 0 1 0 1569.79 456.12" stroke="#c050f8" stroke-width="3.300" fill="none"/><circle cx="1570.100" cy="452.900" r="1.600" fill="#c050f8"/></svg>
<svg width="1800" height="658"><defs><filter id="sh" x="-10%" y="-10%" width="130%" height="130%"><feGaussianBlur in="SourceAlpha" stdDeviation="1.800"/><feOffset dx="3" dy="3"/><feComponentTransfer><feFuncA type="linear" slope=".6"/></feComponentTransfer><feMerge><feMergeNode/><feMergeNode in="SourceGraphic"/></feMerge></filter></defs>
<g filter="url(#sh)"><path d="M1233 578 L1535 476.200" stroke="#fe0000" stroke-width="3.200" fill="none"/><path d="M1554.500 469.200 L1527.900 471.400 L1533.500 476.600 L1530.600 482.800Z" fill="#fe0000"/>
<rect x="1077.500" y="579.500" width="224" height="51" fill="#fff" stroke="#fe0000" stroke-width="3"/></g></svg>
<span class="t" style="left:1081.7px;top:586.0px;font-size:11px;color:#000;font-weight:bold;transform-origin:0 0;transform:scaleX(1.0664);">Установлен признак отношения к</span>
<span class="t" style="left:1081.7px;top:600.0px;font-size:11px;color:#000;font-weight:bold;letter-spacing:0.03px;">UDS</span>
</div>
</body></html>
